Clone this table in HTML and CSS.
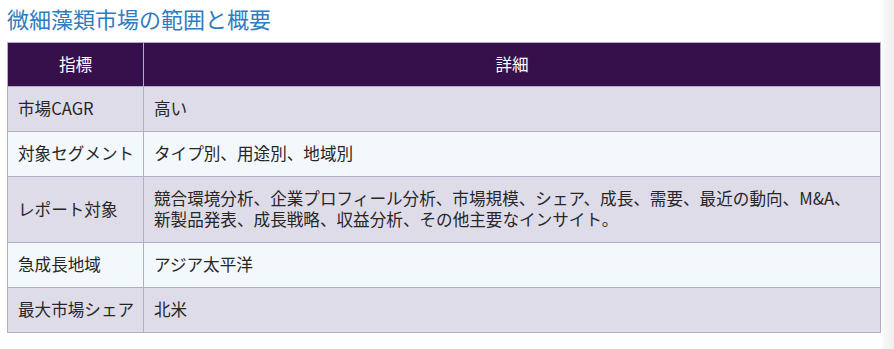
FILE: index.html
```html
<!DOCTYPE html>
<html lang="ja">
<head>
<meta charset="utf-8">
<title>微細藻類市場の範囲と概要</title>
<link rel="stylesheet" href="styles.css">
</head>
<body>
<div class="wrap">
  <h2 class="title">微細藻類市場の範囲と概要</h2>
  <table class="scope">
    <thead>
      <tr><th class="c1">指標</th><th>詳細</th></tr>
    </thead>
    <tbody>
      <tr class="odd"><td class="k">市場CAGR</td><td class="v">高い</td></tr>
      <tr class="even"><td class="k">対象セグメント</td><td class="v">タイプ別、用途別、地域別</td></tr>
      <tr class="odd"><td class="k">レポート対象</td><td class="v">競合環境分析、企業プロフィール分析、市場規模、シェア、成長、需要、最近の動向、M&amp;A、新製品発表、成長戦略、収益分析、その他主要なインサイト。</td></tr>
      <tr class="even"><td class="k">急成長地域</td><td class="v">アジア太平洋</td></tr>
      <tr class="odd"><td class="k">最大市場シェア</td><td class="v">北米</td></tr>
    </tbody>
  </table>
</div>
</body>
</html>
```

FILE: styles.css
```css
html, body {
  margin: 0;
  padding: 0;
}
body {
  background: linear-gradient(to right, #ffffff 0, #ffffff 881px, #f7f7f7 884px, #efefef 894px);
  font-family: "Noto Sans CJK JP", "Noto Sans", sans-serif;
  color: #262626;
}
.wrap {
  padding: 3px 0 0 7px;
  width: 874px;
}
.title {
  margin: 0 0 9px 0;
  font-size: 22px;
  line-height: 30px;
  font-weight: 400;
  color: #2f7cc1;
}
.scope {
  width: 874px;
  border-collapse: collapse;
  font-size: 16.6px;
  line-height: 21px;
}
.scope th, .scope td {
  border: 1px solid #b3adc9;
  padding: 11px 10px 12px 10px;
  text-align: left;
  vertical-align: middle;
}
.scope .k {
  white-space: nowrap;
  padding-right: 4px;
}
.scope .v {
  padding-right: 24px;
}
.scope th {
  background: #36104a;
  color: #ffffff;
  font-weight: 400;
  text-align: center;
  padding: 11px 10px 11px 10px;
}
.scope .c1 {
  width: 115px;
}
.scope .odd td {
  background: #dfdcea;
}
.scope .even td {
  background: #f3f8fc;
}
```
